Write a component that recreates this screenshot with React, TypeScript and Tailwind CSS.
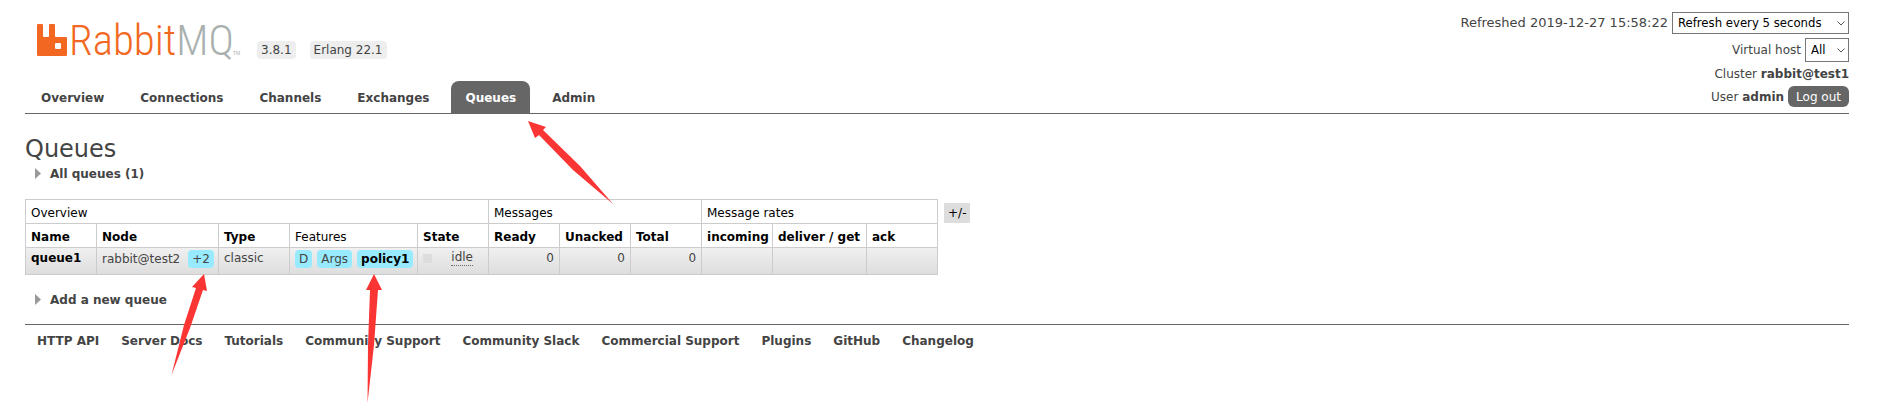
import type { ReactNode } from "react";

const TABS = ["Overview", "Connections", "Channels", "Exchanges", "Queues", "Admin"];

const FOOTER_LINKS = [
  "HTTP API",
  "Server Docs",
  "Tutorials",
  "Community Support",
  "Community Slack",
  "Commercial Support",
  "Plugins",
  "GitHub",
  "Changelog",
];

const GROUPS = [
  { label: "Overview", span: 5 },
  { label: "Messages", span: 3 },
  { label: "Message rates", span: 3 },
];

const COLUMNS = [
  { label: "Name", width: 71, sortable: true },
  { label: "Node", width: 122, sortable: true },
  { label: "Type", width: 71, sortable: true },
  { label: "Features", width: 128, sortable: false },
  { label: "State", width: 71, sortable: true },
  { label: "Ready", width: 71, sortable: true },
  { label: "Unacked", width: 71, sortable: true },
  { label: "Total", width: 71, sortable: true },
  { label: "incoming", width: 71, sortable: true },
  { label: "deliver / get", width: 94, sortable: true },
  { label: "ack", width: 71, sortable: true },
];

const Logo = () => (
  <a href="#/" aria-label="RabbitMQ" className="block">
    <svg width="206" height="48" viewBox="0 0 206 48" className="block">
      <path
        fill="#f26822"
        fillRule="evenodd"
        d="M1 8h4q1 0 1 1v11q0 1 1 1h4q1 0 1-1V9q0-1 1-1h4q1 0 1 1v11q0 1 1 1h10q1 0 1 1v17q0 1-1 1H1q-1 0-1-1V9q0-1 1-1zM18 28v4q0 1 1 1h4q1 0 1-1v-4q0-1-1-1h-4q-1 0-1 1z"
      />
      <text
        x="32"
        y="39"
        fill="#f26822"
        fontFamily="'Roboto Condensed', 'Liberation Sans Narrow', sans-serif"
        fontSize="43"
        fontWeight="300"
      >
        Rabbit
        <tspan fill="#a9b0af">MQ</tspan>
      </text>
      <text x="196" y="39" fill="#a9b0af" fontFamily="Liberation Sans, sans-serif" fontSize="5">
        TM
      </text>
    </svg>
  </a>
);

const Version = ({ children }: { children: ReactNode }) => (
  <span className="rounded bg-[#eeeeee] px-1 leading-[18px]">{children}</span>
);

const Tag = ({ children }: { children: ReactNode }) => (
  <span className="rounded bg-[#98ebff] px-1 leading-[18px]">{children}</span>
);

const Picker = ({ id, options, className }: { id: string; options: string[]; className: string }) => (
  <span className="grid items-center">
    <select
      id={id}
      className={`col-start-1 row-start-1 appearance-none border border-[#767676] bg-white pl-[5px] font-['DejaVu_Sans_Condensed',sans-serif] text-[13px] text-black ${className}`}
    >
      {options.map((option) => (
        <option key={option}>{option}</option>
      ))}
    </select>
    <svg
      width="8"
      height="5"
      viewBox="0 0 8 5"
      className="pointer-events-none col-start-1 row-start-1 mr-1 justify-self-end"
    >
      <path d="M0.5 0.5L4 4L7.5 0.5" fill="none" stroke="#555" />
    </svg>
  </span>
);

const Section = ({ title }: { title: string }) => (
  <h2 className="pt-px">
    <button className="flex items-center gap-[9px] pl-[10px] font-bold leading-4">
      <svg width="6" height="12" viewBox="0 0 6 12">
        <path d="M0 0L6 5.500L0 11z" fill="#999" />
      </svg>
      {title}
    </button>
  </h2>
);

const Header = () => (
  <header className="mr-[10px] flex justify-between border-b border-[#666666]">
    <div className="flex flex-col justify-between">
      <div className="flex gap-[14px] pl-3 pt-4">
        <Logo />
        <div className="flex items-start gap-[14px] pt-[25px]">
          <Version>3.8.1</Version>
          <Version>Erlang 22.1</Version>
        </div>
      </div>
      <nav>
        <ul className="flex gap-2 pl-0.5">
          {TABS.map((tab) => (
            <li key={tab}>
              <a
                href={`#/${tab.toLowerCase()}`}
                className={`block rounded-t-lg px-[14px] pb-[7px] pt-[9px] font-bold leading-4 ${
                  tab === "Queues" ? "bg-[#666666] text-white" : ""
                }`}
              >
                {tab}
              </a>
            </li>
          ))}
        </ul>
      </nav>
    </div>
    <ul className="flex flex-col items-end gap-1 pb-1.5 pt-3 leading-4">
      <li className="flex items-center gap-1">
        <label htmlFor="update-every" className="text-[13px]">
          Refreshed 2019-12-27 15:58:22
        </label>
        <Picker
          id="update-every"
          className="h-[22px] w-[177px]"
          options={["Refresh every 5 seconds", "Refresh every 30 seconds", "Do not refresh"]}
        />
      </li>
      <li className="flex items-center gap-1">
        <label htmlFor="show-vhost">Virtual host</label>
        <Picker id="show-vhost" className="h-6 w-11" options={["All", "/"]} />
      </li>
      <li>
        Cluster <b>rabbit@test1</b>
      </li>
      <li className="flex items-center gap-1">
        <span>
          User <b>admin</b>
        </span>
        <button className="h-[21px] rounded-md bg-[#666666] px-2 text-white">Log out</button>
      </li>
    </ul>
  </header>
);

const QueueTable = () => (
  <table className="w-[913px] table-fixed border-collapse border border-[#cccccc] text-left">
    <colgroup>
      {COLUMNS.map((column) => (
        <col key={column.label} style={{ width: column.width }} />
      ))}
    </colgroup>
    <thead className="text-black">
      <tr className="h-6">
        {GROUPS.map((group) => (
          <th key={group.label} colSpan={group.span} className="border border-[#cccccc] px-[5px] pt-0.5 font-normal">
            {group.label}
          </th>
        ))}
      </tr>
      <tr className="h-6">
        {COLUMNS.map((column) => (
          <th
            key={column.label}
            className={`whitespace-nowrap border border-[#cccccc] px-[5px] pt-0.5 ${
              column.sortable ? "font-bold" : "font-normal"
            }`}
          >
            {column.label}
          </th>
        ))}
      </tr>
    </thead>
    <tbody>
      <tr className="h-[27px] bg-linear-to-b from-[#f0f0f0] to-[#dddddd] align-top leading-[18px] *:border-x *:border-[#cccccc] *:px-[5px] *:pt-px">
        <td>
          <a href="#/queues/queue1" className="font-bold text-black">
            queue1
          </a>
        </td>
        <td>
          <div className="flex gap-2 whitespace-nowrap pt-px">
            rabbit@test2 <Tag>+2</Tag>
          </div>
        </td>
        <td>classic</td>
        <td>
          <div className="flex gap-[5px] pt-px">
            <Tag>D</Tag>
            <Tag>Args</Tag>
            <Tag>
              <a href="#/policies/policy1" className="font-bold text-black">
                policy1
              </a>
            </Tag>
          </div>
        </td>
        <td>
          <div className="flex items-start justify-between pr-[10px]">
            <span className="mt-[5px] size-[9px] bg-[#dddddd]" />
            <abbr className="border-b border-dotted border-[#666666] leading-4 no-underline">idle</abbr>
          </div>
        </td>
        <td className="text-right">0</td>
        <td className="text-right">0</td>
        <td className="text-right">0</td>
        <td />
        <td />
        <td />
      </tr>
    </tbody>
  </table>
);

// Red pointers drawn over the page
const Arrows = () => (
  <svg
    width="640"
    height="415"
    viewBox="0 0 640 415"
    fill="#fb3434"
    className="pointer-events-none absolute left-0 top-0"
  >
    <path d="M528 121L546 127L543 130L580 166L613 204L573 170L539 135L535 138z" />
    <path d="M204 274L207 291L203 290L190 328L171.500 375L184 325L196 288L192 287z" />
    <path d="M374 274L382 290L378 290L374 345L367.500 403L368 345L370 290L366 290z" />
  </svg>
);

export default function App() {
  return (
    <div className="relative min-h-screen bg-white px-[25px] font-['DejaVu_Sans',Verdana,sans-serif] text-xs text-[#444444]">
      <Header />
      <main>
        <h1 className="pt-[19px] text-2xl leading-8">Queues</h1>
        <Section title="All queues (1)" />
        <div className="flex gap-[6px] pb-4 pt-[17px]">
          <QueueTable />
          <button className="mt-1 h-5 self-start bg-[#dddddd] px-1 text-black">+/-</button>
        </div>
        <Section title="Add a new queue" />
      </main>
      <footer className="mr-[10px] mt-4 border-t border-[#666666]">
        <ul className="flex flex-wrap gap-x-[22px] px-3 py-2 font-bold leading-4">
          {FOOTER_LINKS.map((link) => (
            <li key={link}>
              <a href="#/">{link}</a>
            </li>
          ))}
        </ul>
      </footer>
      <Arrows />
    </div>
  );
}
